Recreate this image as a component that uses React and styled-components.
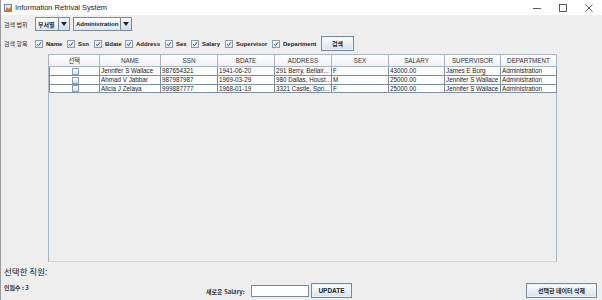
import React from "react";
import styled, { createGlobalStyle } from "styled-components";

const Global = createGlobalStyle`
  html, body { margin: 0; padding: 0; background: #ffffff; }
  body { width: 602px; height: 300px; overflow: hidden; font-family: "Liberation Sans", "Noto Sans CJK KR", sans-serif; }
`;

const Window = styled.div`
  width: 602px;
  height: 300px;
  display: flex;
  flex-direction: column;
  background: #eeeeee;
  border-left: 1px solid #9a9a9a;
  box-sizing: border-box;
`;

const TitleBar = styled.div`
  height: 15px;
  background: #ffffff;
  display: flex;
  align-items: center;
  padding-left: 3px;
  font-size: 7.5px;
  color: #222;
`;

const AppIcon = styled.div`
  width: 8px;
  height: 8px;
  margin-right: 3px;
`;

const TitleText = styled.span`
  flex: 1;
`;

const WinControls = styled.div`
  display: flex;
  align-items: center;
`;

const WinBtn = styled.div`
  width: 26px;
  display: flex;
  justify-content: center;
  align-items: center;
`;

const Body = styled.div`
  flex: 1;
  display: flex;
  flex-direction: column;
  padding: 2px 0 0 2px;
`;

const Row = styled.div`
  display: flex;
  align-items: center;
  height: ${p => p.h}px;
  margin-top: ${p => p.mt || 0}px;
`;

const KLabel = styled.span`
  font-family: "Noto Sans CJK KR", sans-serif;
  font-size: 6px;
  color: #333;
  width: ${p => p.w || 32}px;
  padding-left: 1px;
  box-sizing: border-box;
`;

const Combo = styled.div`
  display: flex;
  height: 14px;
  border: 1px solid #7a8a99;
  box-sizing: border-box;
  background: linear-gradient(#ffffff, #dde8f3);
  margin-right: 3px;
`;

const ComboText = styled.div`
  width: ${p => p.w}px;
  display: flex;
  align-items: center;
  padding-left: 2px;
  box-sizing: border-box;
  font-size: 6px;
  font-weight: bold;
  color: #222;
  white-space: nowrap;
  font-family: ${p => p.k ? '"Noto Sans CJK KR", sans-serif' : '"Liberation Sans", sans-serif'};
`;

const ComboArrow = styled.div`
  width: 10px;
  border-left: 1px solid #7a8a99;
  display: flex;
  align-items: center;
  justify-content: center;
  background: linear-gradient(#f4f8fc, #cfdced);
`;

const Check = styled.label`
  display: flex;
  align-items: center;
  width: ${p => p.w}px;
  font-size: 6px;
  font-weight: bold;
  color: #222;
  white-space: nowrap;
`;

const CheckBox = styled.span`
  width: 6px;
  height: 6px;
  border: 1px solid #8a9db3;
  background: linear-gradient(#ffffff, #d8e4f0);
  display: inline-flex;
  align-items: center;
  justify-content: center;
  margin-right: 3px;
`;

const Button = styled.button`
  height: ${p => p.h || 15}px;
  width: ${p => p.w}px;
  margin-left: ${p => p.ml || 0}px;
  margin-right: ${p => p.mr || 0}px;
  border: 1px solid #7a8a99;
  background: linear-gradient(#ffffff, #d6e2ee);
  padding: 0;
  font-size: ${p => p.k ? 6 : 6.5}px;
  font-weight: bold;
  color: #222;
  font-family: ${p => p.k ? '"Noto Sans CJK KR", sans-serif' : '"Liberation Sans", sans-serif'};
  box-shadow: inset 0 0 0 1px #e8f0f8;
`;

const ScrollPane = styled.div`
  margin: 3px 0 0 45px;
  width: 509px;
  height: 208px;
  border: 1px solid #a8b4c0;
  border-bottom-color: #d0d6dc;
  box-sizing: border-box;
  background: #eeeeee;
`;

const Table = styled.table`
  border-collapse: collapse;
  table-layout: fixed;
  width: 507px;
  font-size: 6.3px;
  color: #222;
`;

const Th = styled.th`
  height: 11px;
  font-weight: normal;
  background: linear-gradient(#ffffff, #eef1f4);
  border-right: 1px solid #a8b4c0;
  border-bottom: 1px solid #a8b4c0;
  padding: 0;
  font-size: 6.3px;
  font-family: ${p => p.k ? '"Noto Sans CJK KR", sans-serif' : '"Liberation Sans", sans-serif'};
  color: #333;
`;

const Td = styled.td`
  height: 7px;
  background: #ffffff;
  border: 1px solid #7d8fa3;
  border-top: 0;
  padding: 0 0 0 1px;
  white-space: nowrap;
  overflow: hidden;
  line-height: 7px;
  text-align: ${p => p.center ? "center" : "left"};
`;

const CellCheck = styled.span`
  display: inline-block;
  width: 5px;
  height: 5px;
  border: 1px solid #8aa0b8;
  background: linear-gradient(#ffffff, #d2e0ee);
  vertical-align: middle;
`;

const Footer = styled.div`
  display: flex;
  flex-direction: column;
  padding-left: 1px;
`;

const Selected = styled.div`
  font-family: "Noto Sans CJK KR", sans-serif;
  font-size: 8.5px;
  color: #222;
  margin-top: 3px;
  height: 14px;
`;

const BottomRow = styled.div`
  display: flex;
  align-items: center;
  height: 15px;
  margin-top: 4px;
`;

const Count = styled.span`
  font-family: "Noto Sans CJK KR", sans-serif;
  font-size: 6px;
  font-weight: bold;
  color: #333;
  width: 202px;
  position: relative;
  top: -3px;
`;

const SalaryLabel = styled.span`
  font-size: 6px;
  font-weight: bold;
  color: #333;
  font-family: "Noto Sans CJK KR", "Liberation Sans", sans-serif;
  width: 45px;
  margin-top: 2px;
`;

const Input = styled.div`
  width: 58px;
  height: 12px;
  border: 1px solid #7a8a99;
  background: #fff;
  box-sizing: border-box;
  margin-right: 2px;
`;

const Spacer = styled.div`
  flex: 1;
`;

const Arrow = () => (
  <svg width="6" height="4" viewBox="0 0 6 4"><path d="M0 0h6L3 4z" fill="#222" /></svg>
);

const Tick = () => (
  <svg width="6" height="6" viewBox="0 0 6 6"><path d="M1 3.2 2.5 4.6 5 1.2" stroke="#2d4a6e" strokeWidth="1" fill="none" /></svg>
);

const cols = [
  ["선택", 50, true], ["NAME", 61], ["SSN", 57], ["BDATE", 57], ["ADDRESS", 57],
  ["SEX", 57], ["SALARY", 56], ["SUPERVISOR", 56], ["DEPARTMENT", 56],
];

const rows = [
  ["Jennifer S Wallace", "987654321", "1941-06-20", "291 Berry, Bellair...", "F", "43000.00", "James E Borg", "Administration"],
  ["Ahmad V Jabbar", "987987987", "1969-03-29", "980 Dallas, Houst...", "M", "25000.00", "Jennifer S Wallace", "Administration"],
  ["Alicia J Zelaya", "999887777", "1968-01-19", "3321 Castle, Spri...", "F", "25000.00", "Jennifer S Wallace", "Administration"],
];

const checks = [
  ["Name", 32], ["Ssn", 27], ["Bdate", 31], ["Address", 40], ["Sex", 26], ["Salary", 34], ["Supervisor", 47], ["Department", 46],
];

export default function App() {
  return (
    <>
      <Global />
      <Window>
        <TitleBar>
          <AppIcon>
            <svg width="8" height="8" viewBox="0 0 8 8">
              <rect x="0.5" y="0.5" width="7" height="7" fill="#e8eef6" stroke="#6a86b0" strokeWidth="1" />
              <path d="M1 7 3 3l2 2 2-3v5z" fill="#d07a2a" />
            </svg>
          </AppIcon>
          <TitleText>Information Retrival System</TitleText>
          <WinControls>
            <WinBtn>
              <svg width="8" height="8" viewBox="0 0 8 8"><path d="M0 4.5h8" stroke="#333" strokeWidth="0.8" /></svg>
            </WinBtn>
            <WinBtn>
              <svg width="8" height="8" viewBox="0 0 8 8"><rect x="0.5" y="0.5" width="7" height="7" stroke="#333" strokeWidth="0.8" fill="none" /></svg>
            </WinBtn>
            <WinBtn>
              <svg width="8" height="8" viewBox="0 0 8 8"><path d="M0.5 0.5l7 7M7.5 0.5l-7 7" stroke="#333" strokeWidth="0.8" /></svg>
            </WinBtn>
          </WinControls>
        </TitleBar>
        <Body>
          <Row h={14}>
            <KLabel>검색 범위</KLabel>
            <Combo>
              <ComboText w={22} k>부서별</ComboText>
              <ComboArrow><Arrow /></ComboArrow>
            </Combo>
            <Combo>
              <ComboText w={46}>Administration</ComboText>
              <ComboArrow><Arrow /></ComboArrow>
            </Combo>
          </Row>
          <Row h={15} mt={5}>
            <KLabel>검색 항목</KLabel>
            {checks.map(([c, w]) => (
              <Check key={c} w={w}>
                <CheckBox><Tick /></CheckBox>
                {c}
              </Check>
            ))}
            <Button w={33} k ml={3}>검색</Button>
          </Row>
          <ScrollPane>
            <Table>
              <colgroup>
                {cols.map(([c, w]) => <col key={c} style={{ width: w }} />)}
              </colgroup>
              <thead>
                <tr>
                  {cols.map(([c, , k]) => <Th key={c} k={k}>{c}</Th>)}
                </tr>
              </thead>
              <tbody>
                {rows.map((r, i) => (
                  <tr key={i}>
                    <Td center><CellCheck /></Td>
                    {r.map((v, j) => <Td key={j}>{v}</Td>)}
                  </tr>
                ))}
              </tbody>
            </Table>
          </ScrollPane>
          <Footer>
            <Selected>선택한 직원:</Selected>
            <BottomRow>
              <Count>인원수 : 3</Count>
              <SalaryLabel>새로운 Salary:</SalaryLabel>
              <Input />
              <Button w={41}>UPDATE</Button>
              <Spacer />
              <Button w={71} k mr={5}>선택한 데이터 삭제</Button>
            </BottomRow>
          </Footer>
        </Body>
      </Window>
    </>
  );
}
